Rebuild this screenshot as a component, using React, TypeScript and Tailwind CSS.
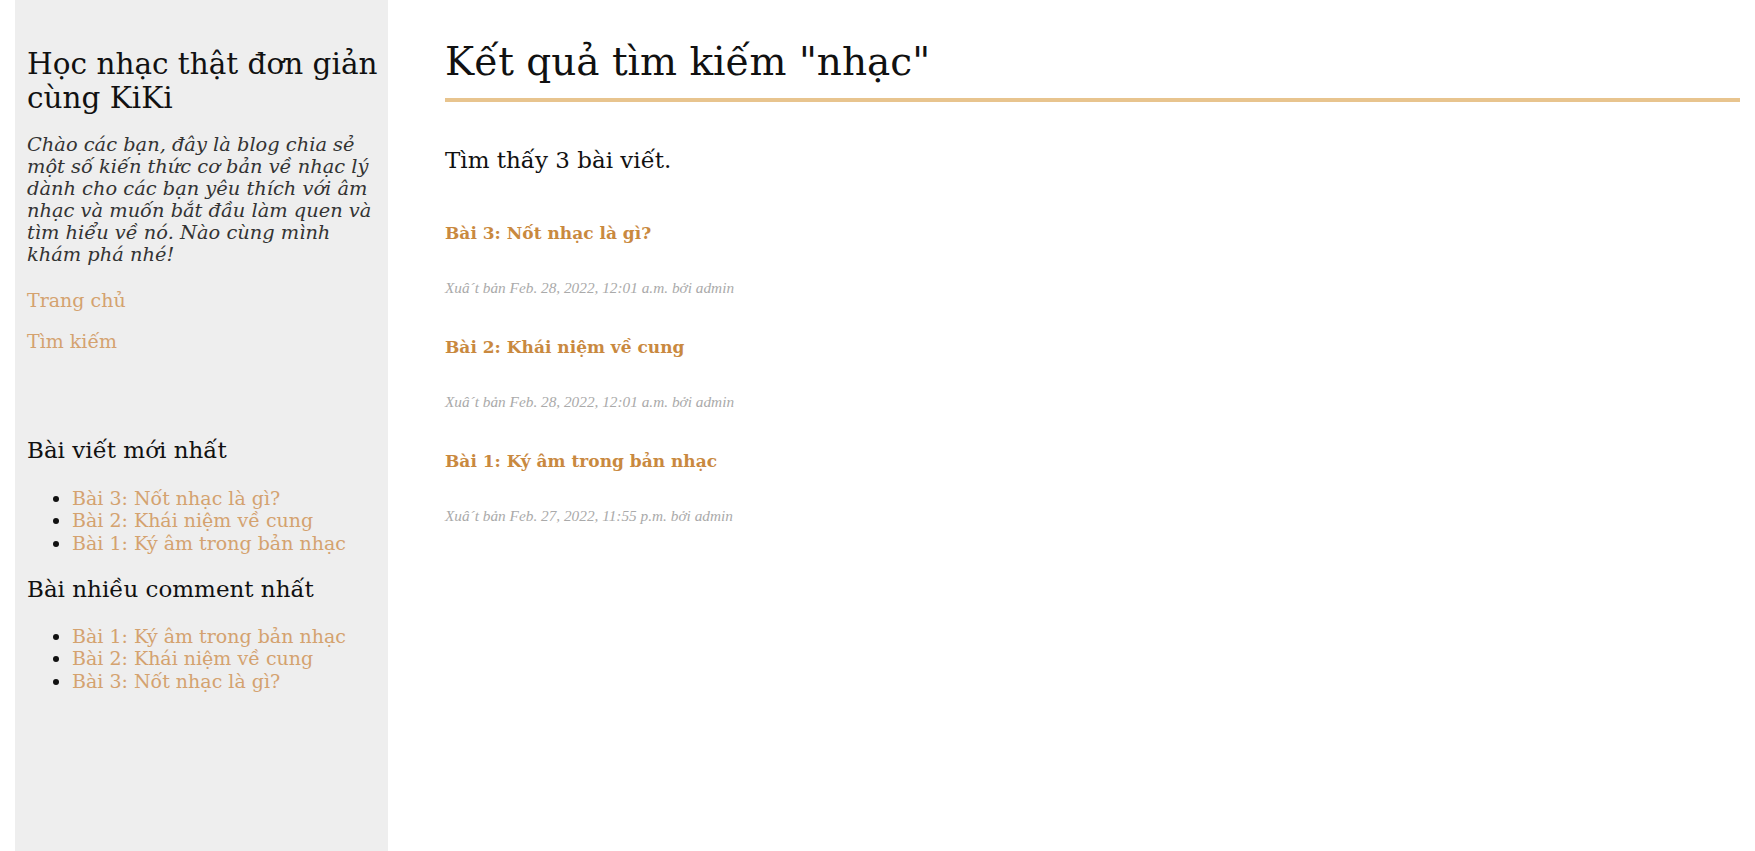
const latest = ["Bài 3: Nốt nhạc là gì?", "Bài 2: Khái niệm về cung", "Bài 1: Ký âm trong bản nhạc"];
const mostComments = ["Bài 1: Ký âm trong bản nhạc", "Bài 2: Khái niệm về cung", "Bài 3: Nốt nhạc là gì?"];

const results = [
  { title: "Bài 3: Nốt nhạc là gì?", date: "Feb. 28, 2022, 12:01 a.m." },
  { title: "Bài 2: Khái niệm về cung", date: "Feb. 28, 2022, 12:01 a.m." },
  { title: "Bài 1: Ký âm trong bản nhạc", date: "Feb. 27, 2022, 11:55 p.m." },
];

export default function App() {
  return (
    <div className="flex min-h-screen bg-white font-['DejaVu_Serif',serif] text-[#111]">
      {/* Sidebar */}
      <aside className="ml-[15px] w-[373px] shrink-0 bg-[#eeeeee] pl-[12px] pr-[10px]">
        <h1 className="mt-[47px] text-[29.5px] leading-[34px] font-normal">Học nhạc thật đơn giản cùng KiKi</h1>
        <p className="mt-[19px] text-[19.4px] leading-[22px] italic text-[#333]">
          Chào các bạn, đây là blog chia sẻ một số kiến thức cơ bản về nhạc lý dành cho các bạn yêu thích với âm nhạc và muốn bắt đầu làm quen và tìm hiểu về nó. Nào cùng mình khám phá nhé!
        </p>
        <nav className="mt-[22px] flex flex-col gap-[17px] text-[19px] leading-[24px] text-[#d4a26f]">
          <a href="#">Trang chủ</a>
          <a href="#">Tìm kiếm</a>
        </nav>

        <h2 className="mt-[82.5px] text-[23px] leading-[28px]">Bài viết mới nhất</h2>
        <ul className="mt-[23px] list-disc pl-[45px] text-[19px] leading-[22.5px]">
          {latest.map((t) => (
            <li key={t}>
              <a href="#" className="text-[#d4a26f]">{t}</a>
            </li>
          ))}
        </ul>

        <h2 className="mt-[20.5px] text-[23px] leading-[28px]">Bài nhiều comment nhất</h2>
        <ul className="mt-[22px] list-disc pl-[45px] text-[19px] leading-[22.5px]">
          {mostComments.map((t) => (
            <li key={t}>
              <a href="#" className="text-[#d4a26f]">{t}</a>
            </li>
          ))}
        </ul>
      </aside>

      {/* Main */}
      <main className="flex-1 pl-[57px] pr-[15px]">
        <h1 className="mt-[40px] border-b-4 border-[#e8c48e] pb-[14px] text-[39px] leading-[44px] font-normal">
          Kết quả tìm kiếm "nhạc"
        </h1>
        <p className="mt-[44px] text-[23px] leading-[28px]">Tìm thấy 3 bài viết.</p>

        <div className="mt-[47px] flex flex-col gap-[38px]">
          {results.map((r) => (
            <div key={r.title}>
              <a href="#" className="block text-[17px] leading-[24px] font-semibold text-[#c9893f]">
                {r.title}
              </a>
              <div className="mt-[34px] font-['Liberation_Serif',serif] text-[15.3px] leading-[18px] italic text-[#aaaaaa]">
                Xuâ´t bản {r.date} bởi admin
              </div>
            </div>
          ))}
        </div>
      </main>
    </div>
  );
}
